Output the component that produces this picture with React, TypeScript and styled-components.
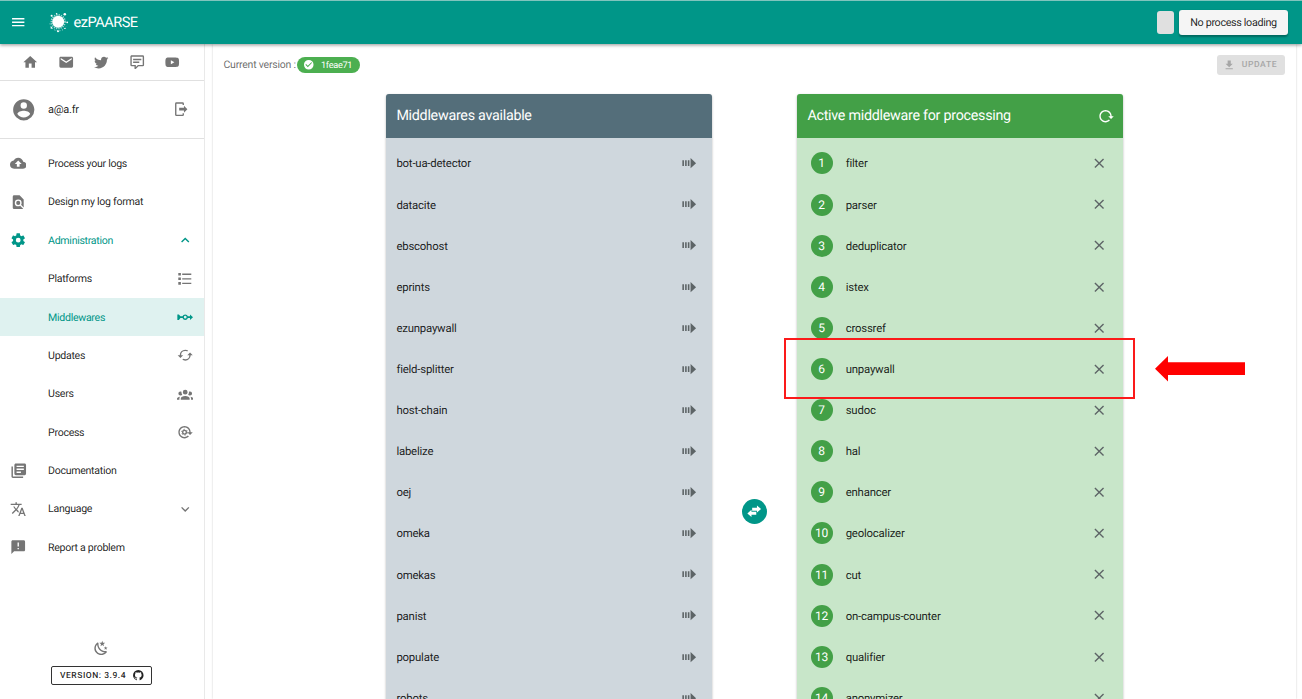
import React from "react";
import styled, { createGlobalStyle } from "styled-components";
import { MdLibraryBooks, MdTranslate, MdAnnouncement } from "react-icons/md";

const GlobalStyle = createGlobalStyle`
  * { box-sizing: border-box; }
  html, body { margin: 0; height: 100%; overflow: hidden; }
  body { font-family: Roboto, "Liberation Sans", sans-serif; color: rgba(0, 0, 0, 0.87); background: #fff; text-rendering: geometricPrecision; }
`;

const paths = {
  menu: "M3,6H21V8H3V6M3,11H21V13H3V11M3,16H21V18H3V16Z",
  home: "M10,20V14H14V20H19V12H22L12,3L2,12H5V20H10Z",
  email: "M20,8L12,13L4,8V6L12,11L20,6M20,4H4C2.89,4 2,4.89 2,6V18A2,2 0 0,0 4,20H20A2,2 0 0,0 22,18V6C22,4.89 21.1,4 20,4Z",
  twitter: "M22.46,6C21.69,6.35 20.86,6.58 20,6.69C20.88,6.16 21.56,5.32 21.88,4.31C21.05,4.81 20.13,5.16 19.16,5.36C18.37,4.5 17.26,4 16,4C13.65,4 11.73,5.92 11.73,8.29C11.73,8.63 11.77,8.96 11.84,9.27C8.28,9.09 5.11,7.38 3,4.79C2.63,5.42 2.42,6.16 2.42,6.94C2.42,8.43 3.17,9.75 4.33,10.5C3.62,10.5 2.96,10.3 2.38,10V10.03C2.38,12.11 3.86,13.85 5.82,14.24C5.46,14.34 5.08,14.39 4.69,14.39C4.42,14.39 4.15,14.36 3.89,14.31C4.43,16 6,17.26 7.89,17.29C6.43,18.45 4.58,19.13 2.56,19.13C2.22,19.13 1.88,19.11 1.54,19.07C3.44,20.29 5.7,21 8.12,21C16,21 20.33,14.46 20.33,8.79C20.33,8.6 20.33,8.42 20.32,8.23C21.16,7.63 21.88,6.87 22.46,6Z",
  comment: "M9,22A1,1 0 0,1 8,21V18H4A2,2 0 0,1 2,16V4C2,2.89 2.9,2 4,2H20A2,2 0 0,1 22,4V16A2,2 0 0,1 20,18H13.9L10.2,21.71C10,21.9 9.75,22 9.5,22H9M10,16V19.08L13.08,16H20V4H4V16H10M6,7H18V9H6V7M6,11H15V13H6V11Z",
  youtube: "M10,15L15.19,12L10,9V15M21.56,7.17C21.69,7.64 21.78,8.27 21.84,9.07C21.91,9.87 21.94,10.56 21.94,11.16L22,12C22,14.19 21.84,15.8 21.56,16.83C21.31,17.73 20.73,18.31 19.83,18.56C19.36,18.69 18.5,18.78 17.18,18.84C15.88,18.91 14.69,18.94 13.59,18.94L12,19C7.81,19 5.2,18.84 4.17,18.56C3.27,18.31 2.69,17.73 2.44,16.83C2.31,16.36 2.22,15.73 2.16,14.93C2.09,14.13 2.06,13.44 2.06,12.84L2,12C2,9.81 2.16,8.2 2.44,7.17C2.69,6.27 3.27,5.69 4.17,5.44C4.64,5.31 5.5,5.22 6.82,5.16C8.12,5.09 9.31,5.06 10.41,5.06L12,5C16.19,5 18.8,5.16 19.83,5.44C20.73,5.69 21.31,6.27 21.56,7.17Z",
  account: "M12,19.2C9.5,19.2 7.29,17.92 6,16C6.03,14 10,12.9 12,12.9C14,12.9 17.97,14 18,16C16.71,17.92 14.5,19.2 12,19.2M12,5A3,3 0 0,1 15,8A3,3 0 0,1 12,11A3,3 0 0,1 9,8A3,3 0 0,1 12,5M12,2A10,10 0 0,0 2,12A10,10 0 0,0 12,22A10,10 0 0,0 22,12C22,6.47 17.5,2 12,2Z",
  logout: "M16,17V14H9V10H16V7L21,12L16,17M14,2A2,2 0 0,1 16,4V6H14V4H5V20H14V18H16V20A2,2 0 0,1 14,22H5A2,2 0 0,1 3,20V4A2,2 0 0,1 5,2H14Z",
  cloud: "M14,13V17H10V13H7L12,8L17,13M19.35,10.03C18.67,6.59 15.64,4 12,4C9.11,4 6.6,5.64 5.35,8.03C2.34,8.36 0,10.9 0,14A6,6 0 0,0 6,20H19A5,5 0 0,0 24,15C24,12.36 21.95,10.22 19.35,10.03Z",
  fileFind: "M9,13A3,3 0 0,0 12,16A3,3 0 0,0 15,13A3,3 0 0,0 12,10A3,3 0 0,0 9,13M20,19.59V8L14,2H6A2,2 0 0,0 4,4V20A2,2 0 0,0 6,22H18C18.45,22 18.85,21.85 19.19,21.6L14.76,17.17C13.96,17.69 13,18 12,18A5,5 0 0,1 7,13A5,5 0 0,1 12,8A5,5 0 0,1 17,13C17,14 16.69,14.96 16.17,15.75L20,19.59Z",
  cog: "M12,15.5A3.5,3.5 0 0,1 8.5,12A3.5,3.5 0 0,1 12,8.5A3.5,3.5 0 0,1 15.5,12A3.5,3.5 0 0,1 12,15.5M19.43,12.97C19.47,12.65 19.5,12.33 19.5,12C19.5,11.67 19.47,11.34 19.43,11L21.54,9.37C21.73,9.22 21.78,8.95 21.66,8.73L19.66,5.27C19.54,5.05 19.27,4.96 19.05,5.05L16.56,6.05C16.04,5.66 15.5,5.32 14.87,5.07L14.5,2.42C14.46,2.18 14.25,2 14,2H10C9.75,2 9.54,2.18 9.5,2.42L9.13,5.07C8.5,5.32 7.96,5.66 7.44,6.05L4.95,5.05C4.73,4.96 4.46,5.05 4.34,5.27L2.34,8.73C2.21,8.95 2.27,9.22 2.46,9.37L4.57,11C4.53,11.34 4.5,11.67 4.5,12C4.5,12.33 4.53,12.65 4.57,12.97L2.46,14.63C2.27,14.78 2.21,15.05 2.34,15.27L4.34,18.73C4.46,18.95 4.73,19.03 4.95,18.95L7.44,17.94C7.96,18.34 8.5,18.68 9.13,18.93L9.5,21.58C9.54,21.82 9.75,22 10,22H14C14.25,22 14.46,21.82 14.5,21.58L14.87,18.93C15.5,18.67 16.04,18.34 16.56,17.94L19.05,18.95C19.27,19.03 19.54,18.95 19.66,18.73L21.66,15.27C21.78,15.05 21.73,14.78 21.54,14.63L19.43,12.97Z",
  up: "M7.41,15.41L12,10.83L16.59,15.41L18,14L12,8L6,14L7.41,15.41Z",
  down: "M7.41,8.58L12,13.17L16.59,8.58L18,10L12,16L6,10L7.41,8.58Z",
  list: "M2,3H6V7H2V3M8,4V6H22V4H8M2,10H6V14H2V10M8,11V13H22V11H8M2,17H6V21H2V17M8,18V20H22V18H8Z",
  middleware: "M0.5,8H2.8L5,10.7H8.1A4.1,4.1 0 0,1 15.9,10.7H19V8L23.5,12L19,16V13.3H15.9A4.1,4.1 0 0,1 8.1,13.3H5L2.8,16H0.5V8M12,10A2,2 0 0,0 12,14A2,2 0 0,0 12,10Z",
  cached: "M19,8L15,12H18A6,6 0 0,1 12,18C11,18 10.03,17.75 9.2,17.3L7.74,18.76C8.97,19.54 10.43,20 12,20A8,8 0 0,0 20,12H23M6,12A6,6 0 0,1 12,6C13,6 13.97,6.25 14.8,6.7L16.26,5.24C15.03,4.46 13.57,4 12,4A8,8 0 0,0 4,12H1L5,16L9,12",
  group: "M12,5.5A3.5,3.5 0 0,1 15.5,9A3.5,3.5 0 0,1 12,12.5A3.5,3.5 0 0,1 8.5,9A3.5,3.5 0 0,1 12,5.5M5,8C5.56,8 6.08,8.15 6.53,8.42C6.38,9.85 6.8,11.27 7.66,12.38C7.16,13.34 6.16,14 5,14A3,3 0 0,1 2,11A3,3 0 0,1 5,8M19,8A3,3 0 0,1 22,11A3,3 0 0,1 19,14C17.84,14 16.84,13.34 16.34,12.38C17.2,11.27 17.62,9.85 17.47,8.42C17.92,8.15 18.44,8 19,8M5.5,18.25C5.5,16.18 8.41,14.5 12,14.5C15.59,14.5 18.5,16.18 18.5,18.25V20H5.5V18.25M0,20V18.5C0,17.11 1.89,15.94 4.45,15.6C3.86,16.28 3.5,17.22 3.5,18.25V20H0M24,20H20.5V18.25C20.5,17.22 20.14,16.28 19.55,15.6C22.11,15.94 24,17.11 24,18.5V20Z",
  reload: "M2 12C2 16.97 6.03 21 11 21C13.39 21 15.68 20.06 17.4 18.4L15.9 16.9C14.63 18.25 12.86 19 11 19C4.76 19 1.64 11.46 6.05 7.05C10.46 2.64 18 5.77 18 12H15L19 16H19.1L23 12H20C20 7.03 15.97 3 11 3C6.03 3 2 7.03 2 12Z",
  night: "M17.75,4.09L15.22,6.03L16.13,9.09L13.5,7.28L10.87,9.09L11.78,6.03L9.25,4.09L12.44,4L13.5,1L14.56,4L17.75,4.09M21.25,11L19.61,12.25L20.2,14.23L18.5,13.06L16.8,14.23L17.39,12.25L15.75,11L17.81,10.95L18.5,9L19.19,10.95L21.25,11M18.97,15.95C19.8,15.87 20.69,17.05 20.16,17.8C19.84,18.25 19.5,18.67 19.08,19.07C15.17,23 8.84,23 4.94,19.07C1.03,15.17 1.03,8.83 4.94,4.93C5.34,4.53 5.76,4.17 6.21,3.85C6.96,3.32 8.14,4.21 8.06,5.04C7.79,7.9 8.75,10.87 10.95,13.06C13.14,15.26 16.1,16.22 18.97,15.95M17.33,17.97C14.5,17.81 11.7,16.64 9.53,14.5C7.36,12.31 6.2,9.5 6.04,6.68C3.23,9.82 3.34,14.64 6.35,17.66C9.37,20.67 14.19,20.78 17.33,17.97Z",
  github: "M12,2A10,10 0 0,0 2,12C2,16.42 4.87,20.17 8.84,21.5C9.34,21.58 9.5,21.27 9.5,21C9.5,20.77 9.5,20.14 9.5,19.31C6.73,19.91 6.14,17.97 6.14,17.97C5.68,16.81 5.03,16.5 5.03,16.5C4.12,15.88 5.1,15.9 5.1,15.9C6.1,15.97 6.63,16.93 6.63,16.93C7.5,18.45 8.97,18 9.54,17.76C9.63,17.11 9.89,16.67 10.17,16.42C7.95,16.17 5.62,15.31 5.62,11.5C5.62,10.39 6,9.5 6.65,8.79C6.55,8.54 6.2,7.5 6.75,6.15C6.75,6.15 7.59,5.88 9.5,7.17C10.29,6.95 11.15,6.84 12,6.84C12.85,6.84 13.71,6.95 14.5,7.17C16.41,5.88 17.25,6.15 17.25,6.15C17.8,7.5 17.45,8.54 17.35,8.79C18,9.5 18.38,10.39 18.38,11.5C18.38,15.32 16.04,16.16 13.81,16.41C14.17,16.72 14.5,17.33 14.5,18.26C14.5,19.6 14.5,20.68 14.5,21C14.5,21.27 14.66,21.59 15.17,21.5C19.14,20.16 22,16.42 22,12A10,10 0 0,0 12,2Z",
  check: "M12,2A10,10 0 0,0 2,12A10,10 0 0,0 12,22A10,10 0 0,0 22,12A10,10 0 0,0 12,2M10,17L5,12L6.41,10.59L10,14.17L17.59,6.58L19,8L10,17Z",
  download: "M5,20H19V18H5M19,9H15V3H9V9H5L12,16L19,9Z",
  close: "M19,6.41L17.59,5L12,10.59L6.41,5L5,6.41L10.59,12L5,17.59L6.41,19L12,13.41L17.59,19L19,17.59L13.41,12L19,6.41Z",
  send: "M2,7.8H4.3V16.2H2V7.8M6,7.8H8.3V16.2H6V7.8M10,7.8H12.3V16.2H10V7.8M14,4.5L22,12L14,19.5Z",
  swap: "M9,7H16V3.5L22,8.8L16,14V11.3H9V7M15,17H8V20.5L2,15.2L8,10V12.7H15V17Z",
};

type IconName = keyof typeof paths;

const Svg = styled.svg<{ $size: number }>`
  display: block;
  flex: none;
  width: ${(p) => p.$size}px;
  height: ${(p) => p.$size}px;
  fill: currentColor;
`;

const Icon = ({ name, size = 16.45 }: { name: IconName; size?: number }) => (
  <Svg $size={size} viewBox="0 0 24 24" fillRule={name === "swap" ? "nonzero" : "evenodd"}>
    <path d={paths[name]} />
  </Svg>
);

const ProcessIcon = () => (
  <Svg $size={16.45} viewBox="0 0 24 24">
    <path d={paths.reload} />
    <circle cx="11" cy="12" r="2.7" fill="none" stroke="currentColor" strokeWidth="2" />
    <circle cx="11" cy="12" r="4.2" fill="none" stroke="currentColor" strokeWidth="1.3" strokeDasharray="2.2 2.2" />
  </Svg>
);

const Logo = () => (
  <Svg $size={21} viewBox="0 0 21 21">
    <circle cx="10.2" cy="9.7" r="6" />
    <circle cx="10.2" cy="9.7" r="6.8" fill="none" stroke="currentColor" strokeWidth="1.7" strokeDasharray="1.3 1" opacity="0.6" />
    <path d="M2 11.5A8.6 8.6 0 0 0 18 14.5" fill="none" stroke="currentColor" strokeWidth="1" strokeDasharray="1 1.6" opacity="0.7" />
    <circle cx="3.6" cy="3.8" r="1" />
    <circle cx="8.6" cy="1.7" r="0.8" />
    <circle cx="16.8" cy="2.3" r="1.3" />
    <circle cx="19.2" cy="10.3" r="0.9" />
    <circle cx="10" cy="19.2" r="1" />
    <circle cx="17" cy="16.4" r="0.7" />
    <circle cx="3.4" cy="15.8" r="0.9" />
  </Svg>
);

const Page = styled.div`
  display: flex;
  flex-direction: column;
  height: 699px;
  overflow: hidden;
`;

const AppBar = styled.header`
  position: relative;
  z-index: 2;
  flex: none;
  display: flex;
  align-items: center;
  height: 44px;
  padding: 0 14px 0 9.5px;
  border-top: 1px solid #80c4bd;
  background: #009688;
  color: #fff;
  box-shadow: 0 1.5px 3px rgba(0, 0, 0, 0.35);
`;

const Brand = styled.div`
  display: flex;
  align-items: center;
  gap: 4px;
  flex: 1;
  margin-left: 22.5px;
  font-size: 14.6px;
  letter-spacing: -0.5px;
`;

const BrandName = styled.span`
  padding-bottom: 1px;
`;

const QueueChip = styled.div`
  width: 17px;
  height: 22.5px;
  margin-right: 5px;
  border-radius: 3px;
  background: #e0e0e0;
`;

const ProcessButton = styled.div`
  width: 109px;
  height: 25px;
  border-radius: 3px;
  background: #f5f5f5;
  color: rgba(0, 0, 0, 0.87);
  font-size: 10.8px;
  letter-spacing: -0.35px;
  line-height: 25px;
  text-align: center;
  box-shadow: 0 1.5px 2px rgba(0, 0, 0, 0.3);
`;

const Body = styled.div`
  display: flex;
  flex: 1;
  min-height: 0;
`;

const Drawer = styled.aside`
  flex: none;
  display: flex;
  flex-direction: column;
  width: 205px;
  border-right: 1px solid #e9e9e9;
  color: #757575;
`;

const Shortcuts = styled.div`
  flex: none;
  display: flex;
  justify-content: space-between;
  align-items: center;
  height: 37px;
  padding: 0 23.5px 0 22px;
  border-bottom: 1px solid #e0e0e0;
`;

const Profile = styled.div`
  flex: none;
  display: flex;
  align-items: center;
  height: 58px;
  padding: 0 15px 0 10.6px;
  border-bottom: 1px solid #e0e0e0;
`;

const Email = styled.span`
  flex: 1;
  margin-left: 12px;
  font-size: 11px;
  letter-spacing: -0.3px;
  color: rgba(0, 0, 0, 0.87);
`;

const Nav = styled.nav`
  flex: none;
  padding-top: 5.4px;
`;

const NavRow = styled.div<{ $state?: "open" | "active" }>`
  display: flex;
  align-items: center;
  height: 38.38px;
  padding: 0 11px 0 9.7px;
  color: ${(p) => (p.$state ? "#009688" : "#757575")};
  background: ${(p) => (p.$state === "active" ? "#dff2f0" : "transparent")};
`;

const NavIcon = styled.span`
  flex: none;
  display: flex;
  width: 38.4px;
`;

const NavLabel = styled.span<{ $accent: boolean }>`
  flex: 1;
  font-size: 10.6px;
  letter-spacing: -0.3px;
  color: ${(p) => (p.$accent ? "#009688" : "rgba(0,0,0,0.87)")};
`;

const DrawerFooter = styled.div`
  margin-top: auto;
  display: flex;
  flex-direction: column;
  align-items: center;
  gap: 9.5px;
  padding: 0 2px 14px 0;
`;

const VersionButton = styled.div`
  display: flex;
  align-items: center;
  justify-content: space-between;
  width: 101px;
  height: 19px;
  padding: 0 5.5px 0 8.5px;
  border: 1px solid #333;
  border-radius: 2px;
  color: rgba(0, 0, 0, 0.87);
  font-size: 8.5px;
  font-weight: 500;
  letter-spacing: 0.53px;
  white-space: nowrap;
`;

const Main = styled.main`
  flex: 1;
  min-width: 0;
  margin: 0 6px 0 8px;
  box-shadow: 0 0 2px rgba(0, 0, 0, 0.2);
`;

const Toolbar = styled.div`
  display: flex;
  align-items: center;
  height: 50px;
  padding: 0 11px 8px 10.5px;
  font-size: 10.5px;
  letter-spacing: -0.22px;
  color: rgba(0, 0, 0, 0.6);
`;

const VersionText = styled.span`
  width: 71px;
  padding-bottom: 1px;
  white-space: nowrap;
`;

const VersionChip = styled.span`
  display: flex;
  align-items: center;
  gap: 6.5px;
  width: 63px;
  height: 16px;
  margin-left: 2.5px;
  padding-left: 6px;
  border-radius: 8px;
  background: #4caf50;
  color: #fff;
  font-size: 9.2px;
  letter-spacing: -0.3px;
`;

const UpdateButton = styled.div`
  display: flex;
  align-items: center;
  justify-content: center;
  gap: 6px;
  width: 68px;
  height: 20px;
  margin-left: auto;
  padding-right: 1.5px;
  border-radius: 3px;
  background: #e0e0e0;
  color: #a6a6a6;
  font-size: 8.6px;
  font-weight: 500;
  letter-spacing: 0.61px;
`;

const Columns = styled.div`
  display: flex;
  align-items: center;
  justify-content: center;
`;

const Panel = styled.section<{ $bg: string }>`
  width: 326px;
  height: 835px;
  border-radius: 3px;
  background: ${(p) => p.$bg};
  box-shadow: 0 1px 2.5px rgba(0, 0, 0, 0.3);
`;

const PanelHeader = styled.div<{ $bg: string }>`
  display: flex;
  align-items: center;
  justify-content: space-between;
  height: 43.8px;
  margin-bottom: 5.1px;
  padding: 0 9px 0 10.4px;
  border-radius: 3px 3px 0 0;
  background: ${(p) => p.$bg};
  color: #fff;
  font-size: 14.3px;
  letter-spacing: -0.27px;
`;

const Row = styled.div<{ $numbered?: boolean }>`
  display: flex;
  align-items: center;
  height: 41.11px;
  padding: ${(p) => (p.$numbered ? "0 15.6px 0 13.5px" : "0 15px 0 10.4px")};
  color: #5d6466;
`;

const Rank = styled.span`
  flex: none;
  width: 22px;
  height: 22px;
  margin-right: 13.2px;
  border-radius: 50%;
  background: #43a047;
  color: #fff;
  font-size: 12px;
  letter-spacing: -0.2px;
  line-height: 22.5px;
  text-align: center;
`;

const RowLabel = styled.span`
  flex: 1;
  font-size: 11.4px;
  letter-spacing: -0.21px;
  color: rgba(0, 0, 0, 0.87);
`;

const SwapSlot = styled.div`
  display: flex;
  justify-content: center;
  width: 85px;
`;

const SwapButton = styled.div`
  display: grid;
  place-items: center;
  width: 25px;
  height: 25px;
  border-radius: 50%;
  background: #009688;
  color: #fff;
`;

const Highlight = styled.div`
  position: absolute;
  z-index: 3;
  left: 784px;
  top: 338px;
  width: 351px;
  height: 61px;
  border: 2px solid #fb1a1a;
`;

const Pointer = styled.svg`
  position: absolute;
  z-index: 3;
  left: 1155px;
  top: 356px;
  width: 91px;
  height: 26px;
  fill: #f00;
`;

const available = ["bot-ua-detector", "datacite", "ebscohost", "eprints", "ezunpaywall", "field-splitter", "host-chain", "labelize", "oej", "omeka", "omekas", "panist", "populate", "robots"];
const active = ["filter", "parser", "deduplicator", "istex", "crossref", "unpaywall", "sudoc", "hal", "enhancer", "geolocalizer", "cut", "on-campus-counter", "qualifier", "anonymizer"];

interface NavItem {
  label: string;
  icon?: React.ReactNode;
  action?: React.ReactNode;
  state?: "open" | "active";
}

const navItems: NavItem[] = [
  { label: "Process your logs", icon: <Icon name="cloud" /> },
  { label: "Design my log format", icon: <Icon name="fileFind" /> },
  { label: "Administration", icon: <Icon name="cog" />, action: <Icon name="up" />, state: "open" },
  { label: "Platforms", action: <Icon name="list" size={15.6} /> },
  { label: "Middlewares", action: <Icon name="middleware" />, state: "active" },
  { label: "Updates", action: <Icon name="cached" /> },
  { label: "Users", action: <Icon name="group" /> },
  { label: "Process", action: <ProcessIcon /> },
  { label: "Documentation", icon: <MdLibraryBooks size={17.5} /> },
  { label: "Language", icon: <MdTranslate size={16.45} />, action: <Icon name="down" /> },
  { label: "Report a problem", icon: <MdAnnouncement size={16.45} /> },
];

export default function App() {
  return (
    <Page>
      <GlobalStyle />
      <AppBar>
        <Icon name="menu" />
        <Brand>
          <Logo />
          <BrandName>ezPAARSE</BrandName>
        </Brand>
        <QueueChip />
        <ProcessButton>No process loading</ProcessButton>
      </AppBar>
      <Body>
        <Drawer>
          <Shortcuts>
            <Icon name="home" />
            <Icon name="email" />
            <Icon name="twitter" />
            <Icon name="comment" />
            <Icon name="youtube" />
          </Shortcuts>
          <Profile>
            <Icon name="account" size={25.5} />
            <Email>a@a.fr</Email>
            <Icon name="logout" />
          </Profile>
          <Nav>
            {navItems.map((item) => (
              <NavRow key={item.label} $state={item.state}>
                <NavIcon>{item.icon}</NavIcon>
                <NavLabel $accent={!!item.state}>{item.label}</NavLabel>
                {item.action}
              </NavRow>
            ))}
          </Nav>
          <DrawerFooter>
            <Icon name="night" />
            <VersionButton>
              VERSION: 3.9.4
              <Icon name="github" size={12.6} />
            </VersionButton>
          </DrawerFooter>
        </Drawer>
        <Main>
          <Toolbar>
            <VersionText>Current version :</VersionText>
            <VersionChip>
              <Icon name="check" size={11.5} />
              1feae71
            </VersionChip>
            <UpdateButton>
              <Icon name="download" size={12.4} />
              UPDATE
            </UpdateButton>
          </Toolbar>
          <Columns>
            <Panel $bg="#cfd7dd">
              <PanelHeader $bg="#546e7a">Middlewares available</PanelHeader>
              {available.map((name) => (
                <Row key={name}>
                  <RowLabel>{name}</RowLabel>
                  <Icon name="send" />
                </Row>
              ))}
            </Panel>
            <SwapSlot>
              <SwapButton>
                <Icon name="swap" />
              </SwapButton>
            </SwapSlot>
            <Panel $bg="#c8e6c9">
              <PanelHeader $bg="#43a047">
                Active middleware for processing
                <Icon name="reload" />
              </PanelHeader>
              {active.map((name, i) => (
                <Row key={name} $numbered>
                  <Rank>{i + 1}</Rank>
                  <RowLabel>{name}</RowLabel>
                  <Icon name="close" />
                </Row>
              ))}
            </Panel>
          </Columns>
        </Main>
      </Body>
      <Highlight />
      <Pointer viewBox="0 0 91 26">
        <path d="M0 12.8L13 0V6.3H90V19H13V25.6Z" />
      </Pointer>
    </Page>
  );
}
